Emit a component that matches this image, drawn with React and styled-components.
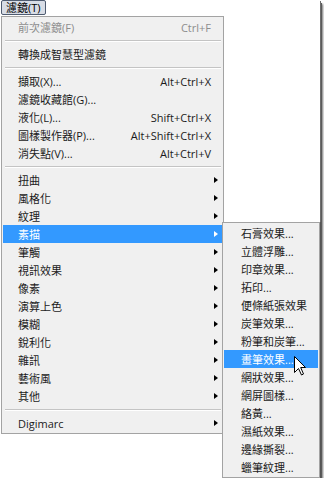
import styled, { createGlobalStyle } from "styled-components";

const GlobalStyle = createGlobalStyle`
  html, body {
    margin: 0;
    padding: 0;
    background: #ffffff;
  }
  body {
    font-family: "Open Sans", "Noto Sans CJK TC", sans-serif;
  }
`;

const mainItems = [
  { label: "前次濾鏡(F)", shortcut: "Ctrl+F", disabled: true },
  "sep",
  { label: "轉換成智慧型濾鏡" },
  "sep",
  { label: "擷取(X)...", shortcut: "Alt+Ctrl+X" },
  { label: "濾鏡收藏館(G)..." },
  { label: "液化(L)...", shortcut: "Shift+Ctrl+X" },
  { label: "圖樣製作器(P)...", shortcut: "Alt+Shift+Ctrl+X" },
  { label: "消失點(V)...", shortcut: "Alt+Ctrl+V" },
  "sep",
  { label: "扭曲", sub: true },
  { label: "風格化", sub: true },
  { label: "紋理", sub: true },
  { label: "素描", sub: true, active: true },
  { label: "筆觸", sub: true },
  { label: "視訊效果", sub: true },
  { label: "像素", sub: true },
  { label: "演算上色", sub: true },
  { label: "模糊", sub: true },
  { label: "銳利化", sub: true },
  { label: "雜訊", sub: true },
  { label: "藝術風", sub: true },
  { label: "其他", sub: true },
  "sep",
  { label: "Digimarc", sub: true },
];

const sketchItems = [
  "石膏效果...",
  "立體浮雕...",
  "印章效果...",
  "拓印...",
  "便條紙張效果",
  "炭筆效果...",
  "粉筆和炭筆...",
  "畫筆效果...",
  "網狀效果...",
  "網屏圖樣...",
  "絡黃...",
  "濕紙效果...",
  "邊緣撕裂...",
  "蠟筆紋理...",
];

const Frame = styled.div`
  position: relative;
  width: 320px;
  height: 478px;
  background: #ffffff;
  box-shadow: 1px 1px 0 #6e6e6e, 2px 3px 0 #5a5a5a, 3px 4px 2px rgba(0, 0, 0, 0.55);
`;

const MenuTitle = styled.div`
  box-sizing: border-box;
  width: 45px;
  height: 15px;
  margin-left: 1px;
  padding-left: 4px;
  border: 1px solid #4e5b70;
  border-radius: 2px;
  background: #d8dde6;
  color: #000;
  font-size: 11px;
  line-height: 13px;
`;

const Menu = styled.div`
  box-sizing: border-box;
  width: 223px;
  margin: 1px 0 0 1px;
  padding: 1px;
  background: #f0f0f0;
  border: 1px solid #a3a3a3;
`;

const Separator = styled.div`
  height: 9px;
  display: flex;
  align-items: center;
  padding: 0 1px 0 2px;

  &::after {
    content: "";
    flex: 1;
    height: 1px;
    background: #c4c4c4;
    border-bottom: 1px solid #ffffff;
  }
`;

const Row = styled.div`
  position: relative;
  height: 18px;
  display: flex;
  align-items: center;
  padding: 0 ${(p) => (p.$sub ? "4px" : "11px")} 0 15px;
  background: ${(p) => (p.$active ? "#3399ff" : "transparent")};
  color: ${(p) => (p.$active ? "#ffffff" : p.$disabled ? "#8d8d8d" : "#1b1b1b")};
  font-size: 11px;
  white-space: nowrap;
`;

const Label = styled.span`
  flex: 1;
`;

const Shortcut = styled.span`
  font-size: 11px;
`;

const Arrow = styled.span`
  width: 0;
  height: 0;
  border-top: 3.5px solid transparent;
  border-bottom: 3.5px solid transparent;
  border-left: 4px solid ${(p) => (p.$active ? "#ffffff" : "#000000")};
`;

const SubMenu = styled.div`
  position: absolute;
  left: 222px;
  top: 222px;
  box-sizing: border-box;
  width: 98px;
  padding: 1px;
  background: #f0f0f0;
  border: 1px solid #a3a3a3;
  box-shadow: 1px 0 0 #555;
`;

const SubRow = styled.div`
  height: 18px;
  display: flex;
  align-items: center;
  padding-left: 17px;
  background: ${(p) => (p.$active ? "#3399ff" : "transparent")};
  color: ${(p) => (p.$active ? "#ffffff" : "#1b1b1b")};
  font-size: 11px;
  white-space: nowrap;
`;

const Pointer = styled.svg`
  position: absolute;
  left: 294px;
  top: 356px;
`;

export default function App() {
  return (
    <>
      <GlobalStyle />
      <Frame>
        <MenuTitle>濾鏡(T)</MenuTitle>
        <Menu>
          {mainItems.map((item, i) =>
            item === "sep" ? (
              <Separator key={i} />
            ) : (
              <Row key={i} $active={item.active} $disabled={item.disabled} $sub={item.sub}>
                <Label>{item.label}</Label>
                {item.shortcut && <Shortcut>{item.shortcut}</Shortcut>}
                {item.sub && <Arrow $active={item.active} />}
              </Row>
            )
          )}
        </Menu>
        <SubMenu>
          {sketchItems.map((s, i) => (
            <SubRow key={s} $active={i === 7}>
              {s}
            </SubRow>
          ))}
        </SubMenu>
        <Pointer width="13" height="20" viewBox="0 0 13 20">
          <path
            d="M0.5 0.5 L0.5 16.5 L4.5 12.5 L7.5 19 L9.5 18 L6.7 11.5 L11.5 11.5 Z"
            fill="#ffffff"
            stroke="#000000"
            strokeWidth="1"
            strokeLinejoin="miter"
          />
        </Pointer>
      </Frame>
    </>
  );
}
